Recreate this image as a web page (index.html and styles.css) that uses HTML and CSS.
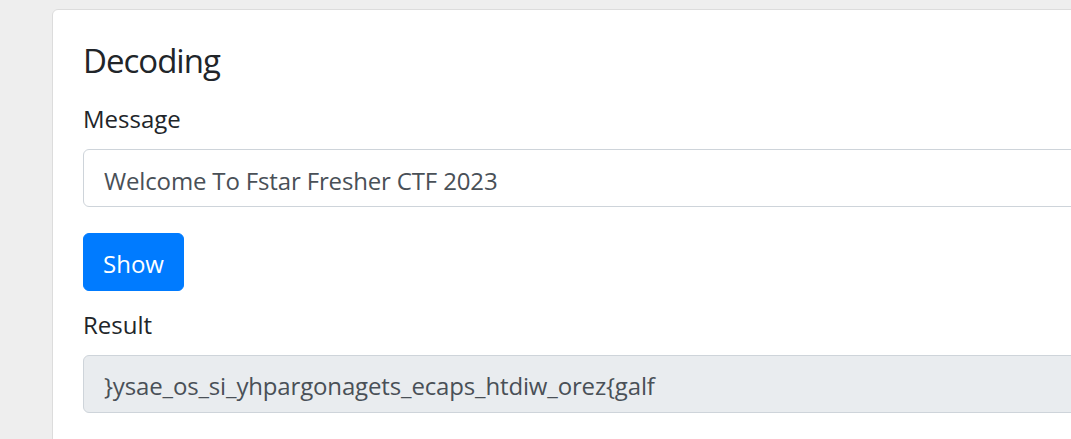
FILE: index.html
```html
<!DOCTYPE html>
<html lang="en">
<head>
<meta charset="utf-8">
<title>Decoding</title>
<link rel="stylesheet" href="styles.css">
</head>
<body>
<main class="page">
  <section class="card">
    <div class="card-body">
      <h4 class="card-title">Decoding</h4>
      <form class="form">
        <label class="label" for="message">Message</label>
        <input class="control" id="message" type="text" value="Welcome To Fstar Fresher CTF 2023">
        <button class="btn" type="button">Show</button>
        <label class="label label-result">Result</label>
        <div class="control control-readonly">}ysae_os_si_yhpargonagets_ecaps_htdiw_orez{galf</div>
      </form>
    </div>
  </section>
</main>
</body>
</html>
```
FILE: styles.css
```css
* { box-sizing: border-box; }
html, body { margin: 0; padding: 0; }
body {
  background: #eeeeee;
  font-family: "Open Sans", "Noto Sans", sans-serif;
  color: #212529;
  overflow: hidden;
  height: 439px;
}
.page {
  padding: 9px 0 0 52px;
}
.card {
  width: 1100px;
  background: #fff;
  border: 1px solid #dcdcdc;
  border-radius: 6px;
  min-height: 500px;
}
.card-body {
  padding: 31px 30px 30px 30px;
}
.card-title {
  margin: 0 0 20px 0;
  font-size: 33px;
  line-height: 40px;
  letter-spacing: -1px;
  font-weight: 400;
  color: #212529;
}
.form {
  display: flex;
  flex-direction: column;
  align-items: flex-start;
}
.label {
  display: block;
  font-size: 24px;
  line-height: 36px;
  margin-bottom: 12px;
  color: #212529;
}
.label-result {
  margin-top: 16px;
}
.control {
  width: 100%;
  height: 58px;
  border: 1px solid #ced4da;
  border-radius: 6px;
  background: #fff;
  color: #495057;
  font-family: inherit;
  font-size: 24px;
  letter-spacing: -0.15px;
  padding: 4px 18px 0 20px;
  margin: 0;
  outline: none;
}
.control-readonly {
  background: #e9ecef;
  line-height: 52px;
  white-space: nowrap;
}
.btn {
  margin-top: 26px;
  height: 58px;
  background: #007bff;
  border: 1px solid #007bff;
  border-radius: 6px;
  color: #fff;
  font-family: inherit;
  font-size: 24px;
  line-height: 52px;
  padding: 4px 19px 0 19px;
  cursor: pointer;
}
```
